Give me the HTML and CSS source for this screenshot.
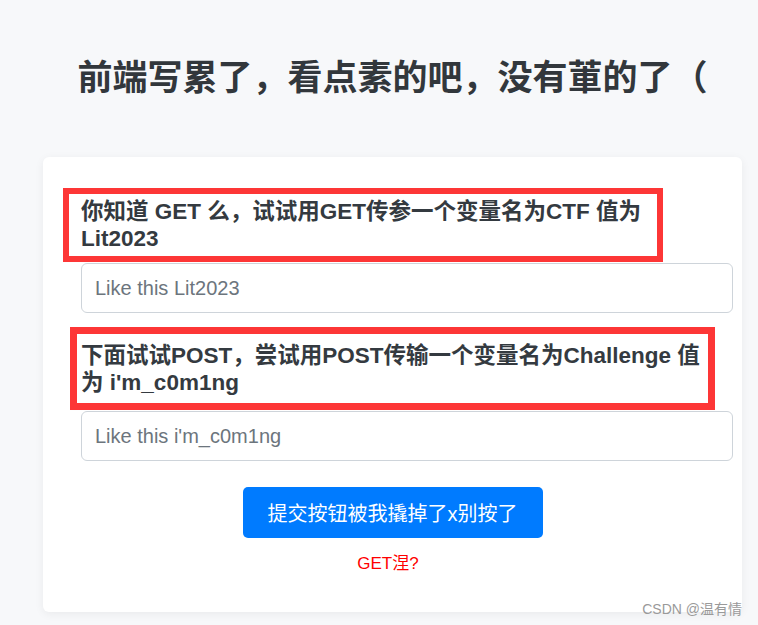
FILE: index.html
```html
<!DOCTYPE html>
<html lang="zh-CN">
<head>
<meta charset="utf-8">
<title>Lit2023</title>
<link rel="stylesheet" href="styles.css">
</head>
<body>
<main class="page">
  <h1 class="title">前端写累了，看点素的吧，没有莗的了（</h1>
  <section class="card">
    <div class="form-group">
      <label class="label" for="ctf">你知道 GET 么，试试用GET传参一个变量名为CTF 值为<br>Lit2023</label>
      <span class="mark mark-one"></span>
      <input class="input" id="ctf" type="text" placeholder="Like this Lit2023">
    </div>
    <div class="form-group second">
      <label class="label" for="challenge">下面试试POST，尝试用POST传输一个变量名为Challenge 值<br>为 i'm_c0m1ng</label>
      <span class="mark mark-two"></span>
      <input class="input" id="challenge" type="text" placeholder="Like this i'm_c0m1ng">
    </div>
    <div class="actions">
      <button class="btn" type="button">提交按钮被我撬掉了x别按了</button>
      <p class="hint">GET涅?</p>
    </div>
  </section>
</main>
<div class="watermark">CSDN @温有情</div>
</body>
</html>
```

FILE: styles.css
```css
html, body {
  margin: 0;
  padding: 0;
  background: #f7f8fa;
  font-family: "Liberation Sans", "Noto Sans CJK SC", sans-serif;
  color: #343a40;
}

.page {
  padding: 0 16px 14px 43px;
}

.title {
  margin: 54px 0 61px;
  width: 699px;
  text-align: center;
  font-family: "Noto Sans CJK SC", sans-serif;
  font-weight: 700;
  font-size: 35px;
  line-height: 42px;
  color: #32373c;
}

.card {
  width: 699px;
  box-sizing: border-box;
  background: #fff;
  border-radius: 6px;
  box-shadow: 0 2px 10px rgba(0, 0, 0, 0.06);
  padding: 41px 0 38px;
}

.form-group {
  position: relative;
  margin: 0 9px 0 38px;
}

.form-group.second {
  margin-top: 29px;
}

.label {
  display: block;
  font-weight: 700;
  font-size: 22.5px;
  line-height: 27px;
  color: #343a40;
  margin-bottom: 11px;
}

.second .label {
  margin-bottom: 15px;
}

.mark {
  position: absolute;
  box-sizing: border-box;
  border: 6px solid #fd3636;
  pointer-events: none;
}

.mark-one {
  left: -18px;
  top: -10px;
  width: 600px;
  height: 74px;
}

.mark-two {
  left: -11px;
  top: -15px;
  width: 645px;
  height: 83px;
  border-width: 7px;
}

.input {
  display: block;
  width: 100%;
  height: 50px;
  box-sizing: border-box;
  border: 1px solid #ced4da;
  border-radius: 6px;
  padding: 0 13px;
  font-family: "Liberation Sans", "Noto Sans CJK SC", sans-serif;
  font-size: 20px;
  color: #495057;
  background: #fff;
}

.input::placeholder {
  color: #6c757d;
}

.actions {
  margin-top: 26px;
  text-align: center;
}

.btn {
  height: 51px;
  padding: 0 25px;
  border: none;
  border-radius: 5px;
  background: #007bff;
  color: #fff;
  font-family: "Liberation Sans", "Noto Sans CJK SC", sans-serif;
  font-size: 20px;
  cursor: pointer;
}

.hint {
  margin: 16px 0 0;
  padding-right: 9px;
  font-size: 17px;
  line-height: 20px;
  color: #ff0000;
}

.watermark {
  position: absolute;
  right: 16px;
  top: 600px;
  font-family: "Liberation Sans", "Noto Sans CJK SC", sans-serif;
  font-size: 14px;
  line-height: 18px;
  color: #9a9a9a;
}
```
